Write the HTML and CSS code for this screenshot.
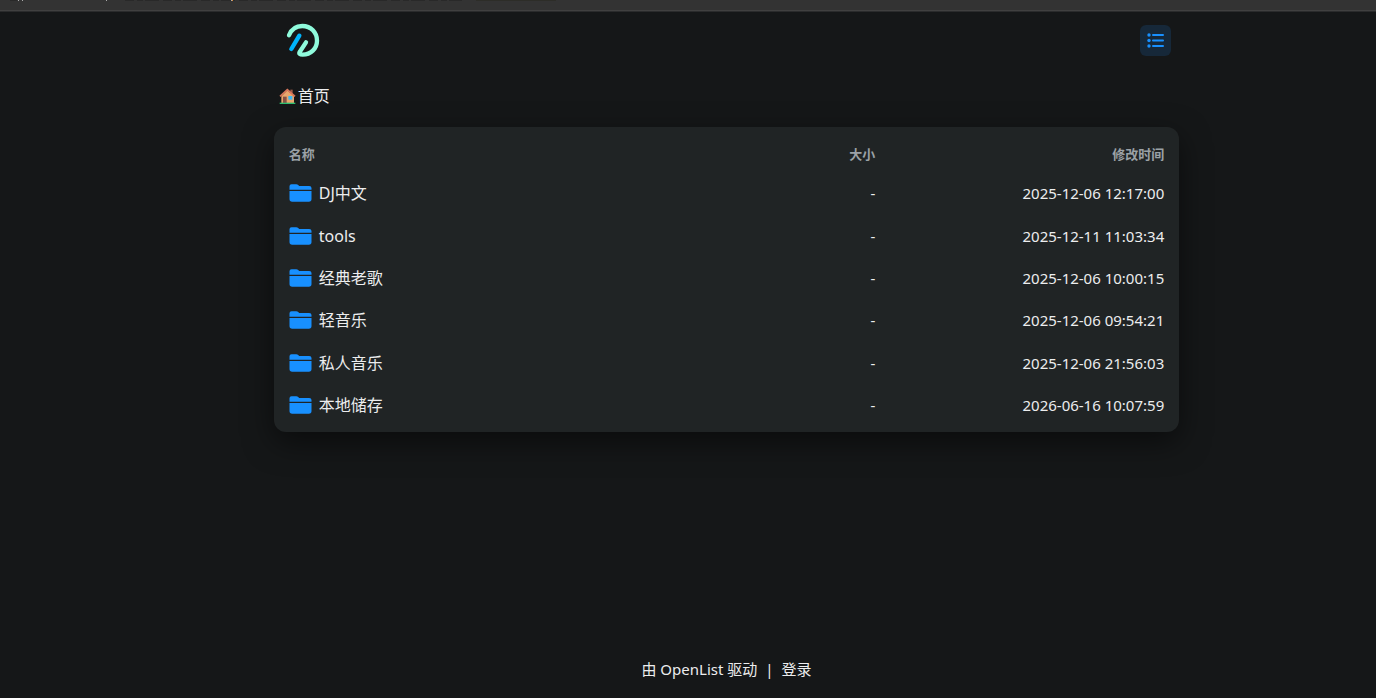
FILE: index.html
```html
<!DOCTYPE html>
<html lang="zh-CN">

<head>
    <meta charset="UTF-8">
    <meta name="viewport" content="width=device-width, initial-scale=1.0">
    <title>OpenList</title>
    <link rel="stylesheet" href="styles.css">
</head>

<body>
    <!-- 图标定义 -->
    <svg class="icon-defs" aria-hidden="true">
        <symbol id="folder" viewBox="0 0 66 54">
            <path d="M0 17V7Q0 1 6 1H20Q24 1 27 4L29 6H59Q66 6 66 12V17Z" />
            <path d="M0 21H66V45Q66 53 58 53H8Q0 53 0 45Z" />
        </symbol>
    </svg>

    <!-- 顶部工具条 -->
    <div class="top-strip">
        <svg width="560" height="2" viewBox="0 0 560 2" aria-hidden="true">
            <path d="M10 .5H17M125 .5H462" stroke="#292929" stroke-dasharray="9 3 6 2 14 4" />
            <path d="M476 .5H556" stroke="#2d2d28" />
            <path d="M18 .5H19M22 .5H23M106 .5H107M231 .5H232" stroke="#aaa" />
            <path d="M232 .5H233" stroke="#d98a3a" />
        </svg>
    </div>

    <div class="page">
        <header class="header">
            <a class="logo" href="#" aria-label="OpenList">
                <svg width="34" height="35" viewBox="48 24 102 105" fill="none" stroke-linecap="round" stroke-width="13">
                    <path d="M57 61C64 43 79 33 97 33C123 33 141 53 141 77C141 101 122 119 98 119Q85 119 89 111L108 82" stroke="#8ffbdc" stroke-linejoin="round" />
                    <path d="M88 62L64 102" stroke="#00b4fb" />
                </svg>
            </a>
            <button class="layout-btn" type="button" aria-label="列表">
                <svg width="17" height="15" viewBox="0 0 17 15" fill="#1890ff">
                    <circle cx="2" cy="2" r="1.7" />
                    <rect x="5" y="1" width="12" height="2" rx="1" />
                    <circle cx="2" cy="7.5" r="1.7" />
                    <rect x="5" y="6.5" width="12" height="2" rx="1" />
                    <circle cx="2" cy="13" r="1.7" />
                    <rect x="5" y="12" width="12" height="2" rx="1" />
                </svg>
            </button>
        </header>

        <nav class="nav">
            <a href="#">
                <svg width="17" height="17" viewBox="0 0 51 51" aria-hidden="true">
                    <path d="M34 5H41V23H34Z" fill="#9b5b49" />
                    <path d="M7 25L25 7L45 25V45H7Z" fill="#e8a66d" />
                    <path d="M3 25L25 5L48 25" fill="none" stroke="#d8765b" stroke-width="5" />
                    <path d="M12 26H23V45H12Z" fill="#865044" />
                    <path d="M28 24H40V35H28Z" fill="#3eb8f2" />
                    <path d="M2 44H49V48H2Z" fill="#2dbd70" />
                </svg>
                <span>首页</span>
            </a>
        </nav>

        <!-- 文件列表 -->
        <main class="card">
            <table class="files">
                <thead>
                    <tr><th class="name">名称</th><th class="size">大小</th><th class="time">修改时间</th></tr>
                </thead>
                <tbody>
                    <tr>
                        <td><a href="#"><svg class="folder"><use href="#folder" /></svg>DJ中文</a></td>
                        <td>-</td>
                        <td>2025-12-06 12:17:00</td>
                    </tr>
                    <tr>
                        <td><a href="#"><svg class="folder"><use href="#folder" /></svg>tools</a></td>
                        <td>-</td>
                        <td>2025-12-11 11:03:34</td>
                    </tr>
                    <tr>
                        <td><a href="#"><svg class="folder"><use href="#folder" /></svg>经典老歌</a></td>
                        <td>-</td>
                        <td>2025-12-06 10:00:15</td>
                    </tr>
                    <tr>
                        <td><a href="#"><svg class="folder"><use href="#folder" /></svg>轻音乐</a></td>
                        <td>-</td>
                        <td>2025-12-06 09:54:21</td>
                    </tr>
                    <tr>
                        <td><a href="#"><svg class="folder"><use href="#folder" /></svg>私人音乐</a></td>
                        <td>-</td>
                        <td>2025-12-06 21:56:03</td>
                    </tr>
                    <tr>
                        <td><a href="#"><svg class="folder"><use href="#folder" /></svg>本地储存</a></td>
                        <td>-</td>
                        <td>2026-06-16 10:07:59</td>
                    </tr>
                </tbody>
            </table>
        </main>

        <footer class="footer">
            <a href="#">由 OpenList 驱动</a>
            <span>|</span>
            <a href="#">登录</a>
        </footer>
    </div>
</body>

</html>
```
FILE: styles.css
```css
* {
    box-sizing: border-box;
}

body {
    display: flex;
    flex-direction: column;
    min-height: 100vh;
    margin: 0;
    background-color: #151718;
    color: #ecedee;
    font-family: "Noto Sans", "Noto Sans CJK SC", sans-serif;
    font-size: 15px;
    line-height: 24px;
}

a {
    color: inherit;
    text-decoration: none;
}

svg {
    display: block;
}

.icon-defs {
    position: absolute;
    width: 0;
    height: 0;
}

.top-strip {
    height: 12px;
    background-color: #333;
    border-bottom: 1px solid #2a2b2c;
    box-shadow: inset 0 -1px #404040;
    overflow: hidden;
}

/* 页面主列 */
.page {
    flex: 1;
    display: flex;
    flex-direction: column;
    width: 65.8%;
    margin-left: 19.9%;
}

.header {
    display: flex;
    align-items: center;
    justify-content: space-between;
    height: 56px;
    padding: 0 8px 0 12px;
}

.layout-btn {
    display: flex;
    align-items: center;
    justify-content: center;
    width: 31px;
    height: 31px;
    padding: 0;
    border: none;
    border-radius: 6px;
    background-color: #162839;
    cursor: pointer;
}

.nav {
    padding: 16px 5px 19px;
    font-size: 16px;
}

.nav a {
    display: inline-flex;
    align-items: center;
    gap: 2px;
    vertical-align: top;
}

/* 列表卡片 */
.card {
    padding: 8px 15px 6px;
    border-radius: 12px;
    background-color: #202425;
    box-shadow: 0 10px 30px rgba(0, 0, 0, 0.5);
}

.files {
    width: 100%;
    border-collapse: collapse;
    table-layout: fixed;
}

.files th {
    height: 37px;
    padding: 0;
    color: #9ba1a6;
    font-size: 13px;
    font-weight: 700;
    text-align: right;
}

.files td {
    height: 42px;
    padding: 0;
    text-align: right;
}

.files tr:nth-child(3n + 2) td {
    height: 43px;
}

.files th:first-child,
.files td:first-child {
    text-align: left;
}

.files .name {
    width: 50%;
}

.files .size {
    width: 17%;
}

.files .time {
    width: 33%;
}

.files td a {
    display: flex;
    align-items: center;
    gap: 7px;
    font-size: 16px;
}

.folder {
    width: 23px;
    height: 18px;
    fill: #1890ff;
}

.footer {
    display: flex;
    justify-content: center;
    gap: 8px;
    margin-top: auto;
    padding-bottom: 17px;
}
```
